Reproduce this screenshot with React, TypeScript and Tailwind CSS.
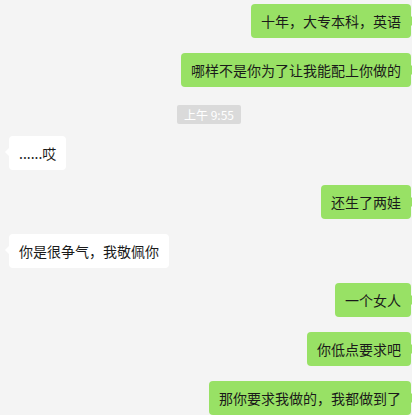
const FONT = '"Noto Sans CJK SC", "Liberation Sans", sans-serif'

type Msg =
  | { kind: 'me' | 'them'; text: string; mt: string }
  | { kind: 'time'; text: string; mt: string }

const MESSAGES: Msg[] = [
  { kind: 'me', text: '十年，大专本科，英语', mt: 'mt-[4px]' },
  { kind: 'me', text: '哪样不是你为了让我能配上你做的', mt: 'mt-[15px]' },
  { kind: 'time', text: '上午 9:55', mt: 'mt-[18px]' },
  { kind: 'them', text: '......哎', mt: 'mt-[12px]' },
  { kind: 'me', text: '还生了两娃', mt: 'mt-[15px]' },
  { kind: 'them', text: '你是很争气，我敬佩你', mt: 'mt-[15px]' },
  { kind: 'me', text: '一个女人', mt: 'mt-[15px]' },
  { kind: 'me', text: '你低点要求吧', mt: 'mt-[15px]' },
  { kind: 'me', text: '那你要求我做的，我都做到了', mt: 'mt-[15px]' },
]

function Bubble({ msg }: { msg: Msg }) {
  if (msg.kind === 'time') {
    return (
      <div className={`flex justify-center pl-[6px] ${msg.mt}`}>
        <span className="bg-[#dadada] text-white text-[12px] leading-[19px] px-[7px] rounded-[2px]">
          {msg.text}
        </span>
      </div>
    )
  }

  const mine = msg.kind === 'me'
  return (
    <div className={`flex ${mine ? 'justify-end pr-[1px]' : 'justify-start pl-[9px]'} ${msg.mt}`}>
      <div
        className={`relative rounded-[4px] px-[10px] py-[7px] text-[14px] leading-[20px] text-[#1a1a1a] whitespace-nowrap ${
          mine ? 'bg-[#98e165]' : 'bg-white'
        }`}
      >
        {msg.text}
        {/* little tail */}
        {mine ? (
          <span className="absolute top-[12px] -right-[5px] w-0 h-0 border-y-[5px] border-y-transparent border-l-[5px] border-l-[#98e165]" />
        ) : (
          <span className="absolute top-[12px] -left-[4px] w-0 h-0 border-y-[4px] border-y-transparent border-r-[4px] border-r-white" />
        )}
      </div>
    </div>
  )
}

export default function App() {
  return (
    <div className="w-[412px] h-[415px] bg-[#f4f4f4] overflow-hidden" style={{ fontFamily: FONT }}>
      {MESSAGES.map((m, i) => (
        <Bubble key={i} msg={m} />
      ))}
    </div>
  )
}
